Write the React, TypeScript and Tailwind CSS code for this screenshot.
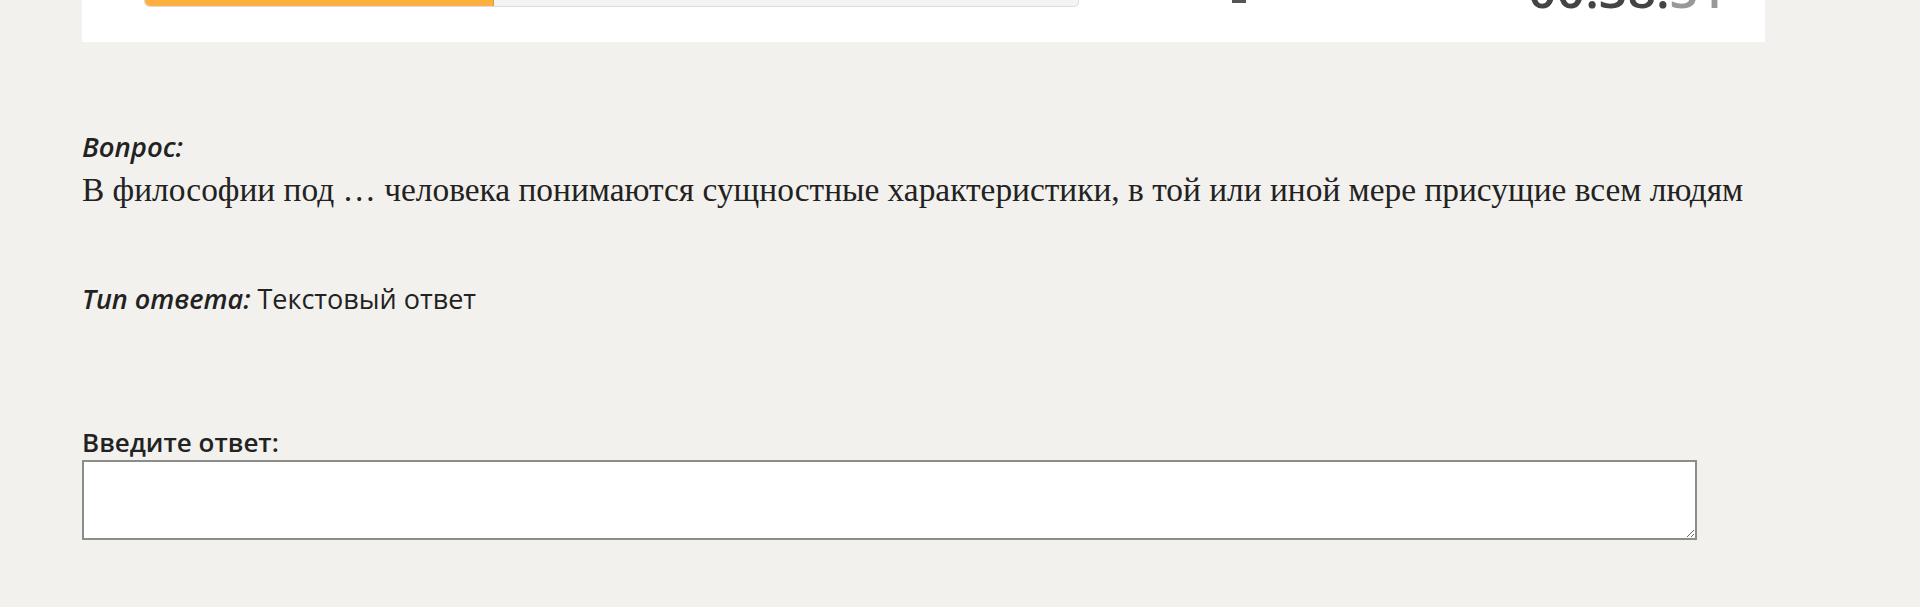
import { useState } from 'react'

const sans = { fontFamily: '"Open Sans", "Liberation Sans", sans-serif' }

function TestHeader() {
  return (
    <div className="ml-[82px] w-[1683px] h-[42px] overflow-hidden bg-white">
      <div className="flex items-end h-[7px]">
        <div className="ml-[62px] w-[935px] h-[30px] flex rounded-[5px] border border-[#dcdcdc] bg-[#f4f4f4] overflow-hidden">
          <div className="w-[349px] h-full bg-[#fbb040] border-r border-[#e39a2b] rounded-l-[5px]" />
        </div>
        <div className="ml-[153px] mb-[4px] w-[14px] h-[3px] bg-[#555]" />
        <div
          className="ml-[282px] -mb-[7px] text-[50px] leading-none font-semibold text-[#444]"
          style={sans}
        >
          00:38:
          <span className="text-[#999]">31</span>
        </div>
      </div>
    </div>
  )
}

export default function App() {
  const [answer, setAnswer] = useState('')

  return (
    <div className="min-h-[607px] bg-[#f2f1ed] text-[#222]">
      <TestHeader />
      <div className="pl-[82px] pt-[89px]" style={sans}>
        <div className="text-[27.5px] leading-[32px] italic font-semibold">Вопрос:</div>
        <div
          className="mt-[7px] text-[33.4px] leading-[40px] text-[#222]"
          style={{ fontFamily: '"Liberation Serif", "Times New Roman", serif' }}
        >
          В философии под … человека понимаются сущностные характеристики, в той или иной мере присущие всем людям
        </div>
        <div className="mt-[73px] text-[27px] leading-[32px]">
          <span className="italic font-semibold">Тип ответа:</span>
          {' '}
          Текстовый ответ
        </div>
        <div className="mt-[111px] text-[26px] leading-[32px] font-semibold">Введите ответ:</div>
        <textarea
          value={answer}
          onChange={e => setAnswer(e.target.value)}
          className="block mt-[2px] w-[1615px] h-[80px] border-2 border-[#8c8c89] bg-white outline-none"
        />
      </div>
    </div>
  )
}
